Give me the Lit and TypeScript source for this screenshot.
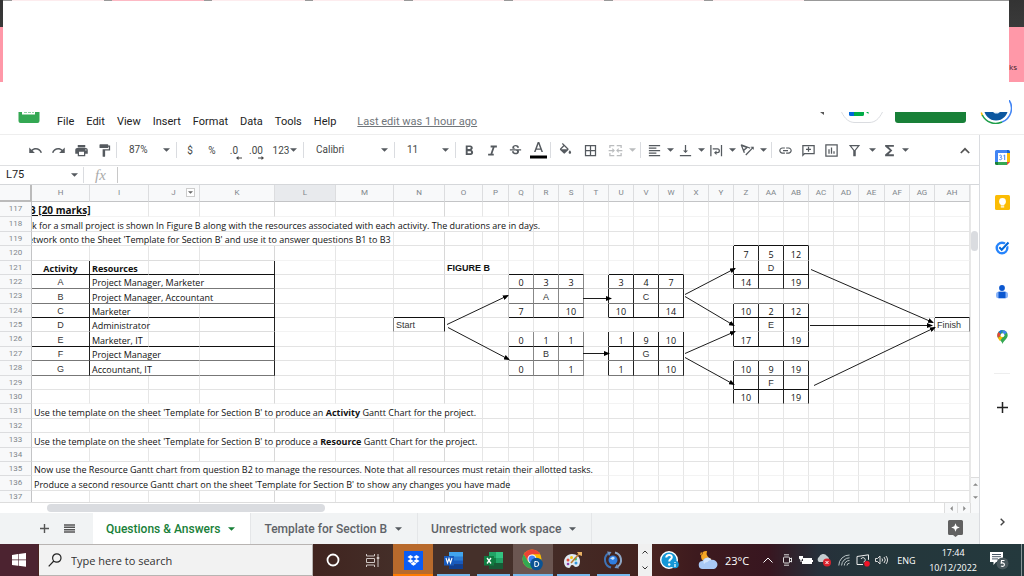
import { LitElement, html, css, svg, nothing } from "lit";
import { customElement } from "lit/decorators.js";
import { classMap } from "lit/directives/class-map.js";

const COLS = "H I J K L M N O P Q R S T U V W X Y Z AA AB AC AD AE AF AG AH".split(" ");
const COL_WIDTHS = [58, 59, 51, 75, 61, 58, 51, 38, 26, 25, 25, 25, 25, 25, 25, 25, 25, 25, 25, 25, 25, 25, 25, 26, 25, 25];
const STRONG_COLS = ["N", "K"];
const FIRST_ROW = 117;
const ROW_HEIGHTS = [15, 15, 14, 15, 14, 14, 15, 14, 14, 15, 14, 15, 14, 14, 15, 14, 15, 14, 14, 15, 13];
const SOFT_ROWS = [120, 125, 130, 135, 117];
const GREY_ROWS = [122, 123, 127, 128];

interface Cell { t: unknown; k?: string; span?: number }
interface Box { c0: string; c1: string; r0: number; r1: number; open?: boolean; tone?: string }

const BOXES: Box[] = [
  { c0: "H", c1: "H", r0: 121, r1: 128 },
  { c0: "I", c1: "K", r0: 121, r1: 128, open: true },
  { c0: "N", c1: "N", r0: 125, r1: 125 },
  { c0: "AH", c1: "AH", r0: 125, r1: 125 },
  { c0: "Q", c1: "S", r0: 122, r1: 124, tone: "grey" },
  { c0: "Q", c1: "S", r0: 126, r1: 128, tone: "grey" },
  { c0: "U", c1: "W", r0: 122, r1: 124 },
  { c0: "U", c1: "W", r0: 126, r1: 128 },
  { c0: "Z", c1: "AB", r0: 120, r1: 122 },
  { c0: "Z", c1: "AB", r0: 124, r1: 126 },
  { c0: "Z", c1: "AB", r0: 128, r1: 130 },
];

const CELLS: Record<string, Cell> = {
  H117: { t: "B [20 marks]", k: "title", span: 2 },
  H118: { t: "k for a small project is shown In Figure B along with the resources associated with each activity. The durations are in days.", k: "flush", span: 10 },
  H119: { t: "etwork onto the Sheet 'Template for Section B' and use it to answer questions B1 to B3", k: "cut", span: 6 },
  H121: { t: "Activity", k: "mid bold" },
  I121: { t: "Resources", k: "bold" },
  O121: { t: "FIGURE B", k: "bold arial", span: 2 },
  N125: { t: "Start", k: "arial soft" },
  AH125: { t: "Finish", k: "arial soft" },
  H131: { t: html`Use the template on the sheet 'Template for Section B' to produce an <b>Activity</b> Gantt Chart for the project.`, span: 8 },
  H133: { t: html`Use the template on the sheet 'Template for Section B' to produce a <b>Resource</b> Gantt Chart for the project.`, span: 8 },
  H135: { t: "Now use the Resource Gantt chart from question B2 to manage the resources. Note that all resources must retain their allotted tasks.", span: 13 },
  H136: { t: "Produce a second resource Gantt chart on the sheet 'Template for Section B' to show any changes you have made", span: 9 },
};

const RESOURCES: [string, string, number][] = [
  ["A", "Project Manager, Marketer", 3],
  ["B", "Project Manager, Accountant", 3],
  ["C", "Marketer", 1],
  ["D", "Administrator", 1],
  ["E", "Marketer, IT", 1],
  ["F", "Project Manager", 2],
  ["G", "Accountant, IT", 2],
];
RESOURCES.forEach(([a, r, span], i) => {
  CELLS[`H${122 + i}`] = { t: a, k: "mid arial soft" };
  CELLS[`I${122 + i}`] = { t: r, span };
});

const NODES: [string, number, string, number[]][] = [
  ["Q", 122, "A", [0, 3, 3, 7, 10]],
  ["Q", 126, "B", [0, 1, 1, 0, 1]],
  ["U", 122, "C", [3, 4, 7, 10, 14]],
  ["U", 126, "G", [1, 9, 10, 1, 10]],
  ["Z", 120, "D", [7, 5, 12, 14, 19]],
  ["Z", 124, "E", [10, 2, 12, 17, 19]],
  ["Z", 128, "F", [10, 9, 19, 10, 19]],
];
NODES.forEach(([c, r, name, v]) => {
  const i = COLS.indexOf(c);
  const put = (dc: number, dr: number, t: unknown, k: string) => { CELLS[`${COLS[i + dc]}${r + dr}`] = { t, k }; };
  put(0, 0, v[0], "mid"); put(1, 0, v[1], "mid"); put(2, 0, v[2], "mid");
  put(1, 1, name, "mid arial soft");
  put(0, 2, v[3], "mid"); put(2, 2, v[4], "mid");
});

const ARROWS = [
  [447, 139, 508, 110], [448, 142, 509, 174], [583, 113, 611, 113], [583, 168, 609, 168],
  [685, 109, 735, 83], [685, 111, 734, 140], [685, 168, 735, 146], [685, 172, 734, 199],
  [811, 84, 933, 137], [810, 140, 932, 140], [814, 200, 935, 142],
];

const boxAt = (c: number, r: number) =>
  BOXES.find((b) => r >= b.r0 && r <= b.r1 && c >= COLS.indexOf(b.c0) && c <= COLS.indexOf(b.c1));

const icon = (d: string, cls = "i16") => html`<svg class=${cls} viewBox="0 0 24 24" aria-hidden="true"><path d=${d} /></svg>`;
const caret = html`<svg class="caret" viewBox="0 0 8 4" aria-hidden="true"><path d="M0 0h8L4 4z" /></svg>`;

const P = {
  undo: "M12.5 8c-2.65 0-5.05.99-6.9 2.6L2 7v9h9l-3.62-3.62c1.39-1.16 3.16-1.88 5.12-1.88 3.54 0 6.55 2.31 7.6 5.5l2.37-.78C21.08 11.03 17.15 8 12.5 8z",
  redo: "M18.4 10.6C16.55 8.99 14.15 8 11.5 8c-4.65 0-8.58 3.03-9.96 7.22L3.9 16c1.05-3.19 4.05-5.5 7.6-5.5 1.95 0 3.73.72 5.12 1.88L13 16h9V7l-3.6 3.6z",
  print: "M19 8H5c-1.66 0-3 1.34-3 3v6h4v4h12v-4h4v-6c0-1.66-1.34-3-3-3zm-3 11H8v-5h8v5zm3-7c-.55 0-1-.45-1-1s.45-1 1-1 1 .45 1 1-.45 1-1 1zm-1-9H6v4h12V3z",
  paint: "M18 4V3c0-.55-.45-1-1-1H5c-.55 0-1 .45-1 1v4c0 .55.45 1 1 1h12c.55 0 1-.45 1-1V6h1v4H9v11c0 .55.45 1 1 1h2c.55 0 1-.45 1-1v-9h8V4h-3z",
  bold: "M15.6 10.79c.97-.67 1.65-1.77 1.65-2.79 0-2.26-1.75-4-4-4H6v15h8.04c2.09 0 3.71-1.7 3.71-3.79 0-1.52-.86-2.82-2.15-3.42zM9 6.5h3.500c.83 0 1.500.67 1.500 1.500s-.67 1.500-1.500 1.500H9v-3zm4 10H9v-3.500h4c.83 0 1.500.67 1.500 1.750s-.67 1.750-1.500 1.750z",
  italic: "M9 4v3h3.200l-3.400 10H5v3h9v-3h-2.200l3.400-10H19V4z",
  strike: "M6.850 7.080C6.850 4.370 9.450 3 12.240 3c1.640 0 3 .49 3.900 1.280.77.65 1.460 1.730 1.460 3.240h-3.010c0-.31-.05-.59-.15-.85-.29-.86-1.200-1.280-2.250-1.280-1.860 0-2.340 1.020-2.340 1.700 0 .48.25.88.74 1.210.38.25.77.48 1.410.70H7.390c-.21-.34-.54-.89-.54-1.920zM21 12v-2H3v2h9.620c1.150.45 1.960.75 1.960 1.970 0 1-.81 1.670-2.280 1.670-1.540 0-2.930-.54-2.930-2.510H6.400c0 .55.08 1.130.24 1.580.81 2.290 3.290 3.300 5.670 3.300 2.270 0 5.300-.89 5.300-4.050 0-.30-.01-1.160-.48-1.940H21V12z",
  fill: "M16.560 8.940 7.620 0 6.210 1.410l2.380 2.380-5.150 5.150c-.59.59-.59 1.540 0 2.120l5.500 5.500c.29.29.68.44 1.060.44s.77-.15 1.060-.44l5.500-5.500c.59-.58.59-1.530 0-2.120zM5.210 10 10 5.210 14.790 10H5.210zM19 11.500s-2 2.170-2 3.500c0 1.100.9 2 2 2s2-.9 2-2c0-1.330-2-3.500-2-3.500z",
  grid: "M3 3v18h18V3H3zm8 16H5v-6h6v6zm0-8H5V5h6v6zm8 8h-6v-6h6v6zm0-8h-6V5h6v6z",
  merge: "M2 3h8v2H4v3H2zM14 3h8v5h-2V5h-6zM2 16h2v3h6v2H2zM20 16h2v5h-8v-2h6zM1 11h6V8l4 4-4 4v-3H1zM23 11h-6V8l-4 4 4 4v-3h6z",
  left: "M15 15H3v2h12v-2zm0-8H3v2h12V7zM3 13h18v-2H3v2zm0 8h18v-2H3v2zM3 3v2h18V3H3z",
  bottom: "M16 12h-3V3h-2v9H8l4 4 4-4zM3 19v2h18v-2H3z",
  wrap: "M2 3h2v18H2zM19 3h2v18h-2zM6 10.500h7.500a2 2 0 0 1 0 4H12v-2.500l-4 3.500 4 3.500v-2.500h1.500a4 4 0 0 0 0-8H6z",
  rotate: "M1 3l5 13 2-.8-1.200-3 5.700-4.800 3 1.800L17 7.600 2.500 2zm4.800 7L4 5.500l5.500 2zM22 6v5l-1.700-1.700L10 20l-1.500-1.500L18.800 7.800 17 6z",
  link: "M3.900 12c0-1.710 1.390-3.100 3.100-3.100h4V7H7c-2.760 0-5 2.240-5 5s2.240 5 5 5h4v-1.900H7c-1.710 0-3.100-1.390-3.100-3.100zM8 13h8v-2H8v2zm9-6h-4v1.900h4c1.710 0 3.100 1.390 3.100 3.100s-1.390 3.100-3.100 3.100h-4V17h4c2.760 0 5-2.240 5-5s-2.240-5-5-5z",
  comment: "M2 3v19l4-4h16V3H2zm18 13H5l-1 1V5h16v11zM11 6h2v3h3v2h-3v3h-2v-3H8V9h3z",
  chart: "M2 2v20h20V2H2zm18 18H4V4h16v16zM7 10h2v7H7zm4-3h2v10h-2zm4 6h2v4h-2z",
  filter: "M3 3h18l-7 9v9h-4v-9zm4 2 5 6.500L17 5z",
  sigma: "M19 3H5v2.500l7.500 6.500L5 18.500V21h14v-3H10.500l6-6-6-6H19z",
};

@customElement("sheet-grid")
class SheetGrid extends LitElement {
  static styles = css`
    :host { display: grid; grid-template: minmax(0, 1fr) 10px / minmax(0, 1fr) 9px; min-height: 0; flex: 1; background: #fff; }
    .pane { position: relative; overflow: hidden; border-bottom: 1px solid #ddd; }
    table { width: 100%; table-layout: fixed; border-collapse: separate; border-spacing: 0; }
    th, td { box-sizing: border-box; padding: 0; font-weight: 400; white-space: nowrap; }
    thead th { height: 17px; font: 8px/14px Roboto, sans-serif; color: #80868b; background: #f8f9fa; border-right: 1px solid #dcdddf; border-bottom: 1px solid #c3c4c6; }
    thead th.corner { border-right: 2px solid #bbb; border-bottom: 2px solid #bbb; }
    thead th.on { background: #e8eaed; }
    .drop { float: right; width: 9px; height: 9px; margin: 2px 4px 0 0; padding: 0; border: 1px solid #ccc; background: #fff; display: grid; place-items: center; }
    .drop svg { width: 5px; height: 3px; fill: #666; }
    .jlabel { padding-left: 12px; }
    tbody th { font: 8px/12px Roboto, sans-serif; color: #80868b; background: #f8f9fa; border-right: 1px solid #c3c4c6; border-bottom: 1px solid #dcdddf; }
    td { font: 9px/11px "Open Sans", "Noto Sans", sans-serif; color: #111; padding: 2px 0 0 2px; border-right: 1px solid #e6e6e6; border-bottom: 1px solid #e3e3e3; vertical-align: bottom; }
    td.strongcol { border-right-color: #d8d8d8; }
    td.softrow { border-bottom-color: #f3f3f3; }
    td.vbox { border-right-color: #222; }
    td.vgrey { border-right-color: #888; }
    td.vlight { border-right-color: #c4c4c4; }
    td.hbox { border-bottom-color: #111; }
    td.hgrey { border-bottom-color: #777; }
    td.hsoft { border-bottom-color: #ddd; }
    .mid { text-align: center; padding-left: 0; }
    .bold { font-weight: 700; }
    .arial { font-family: "Liberation Sans", Arial, sans-serif; }
    .soft { color: #333; }
    .title { font-size: 10px; font-weight: 700; text-decoration: underline; text-indent: -3px; overflow: hidden; padding-left: 0; }
    .flush { padding-left: 0; }
    .cut { text-indent: -4px; overflow: hidden; padding-left: 0; }
    .arrows { position: absolute; inset: 0; width: 100%; height: 100%; pointer-events: none; }
    .arrows line { stroke: #1c1c1c; stroke-width: 1; }
    .vbar { display: flex; flex-direction: column; justify-content: space-between; border-left: 1px solid #e8e8e8; padding-top: 46px; }
    .vthumb { width: 7px; height: 20px; border-radius: 4px; background: #dadce0; }
    .steps { display: grid; grid-template-rows: 13px 12px; border-top: 1px solid #ddd; background: #f8f9fa; }
    .step { border: 0; padding: 0; background: #f8f9fa; display: grid; place-items: center; }
    .step svg { width: 5px; height: 5px; fill: #888; }
    .hbar { display: flex; align-items: stretch; padding-left: 47px; }
    .hthumb { width: 278px; margin: 1px auto 1px 0; border-radius: 4px; background: #dadce0; }
    .hbar .step { width: 13px; border-left: 1px solid #ddd; }
    .nook { background: #f8f9fa; border-left: 1px solid #ddd; }
  `;

  private cell(r: number, c: number, cell: Cell | undefined) {
    const span = cell?.span ?? 1;
    const last = c + span - 1;
    const here = boxAt(last, r);
    const next = last + 1 < COLS.length ? boxAt(last + 1, r) : undefined;
    const v = here !== next ? here ?? next : here && !here.open ? here : undefined;
    const h = boxAt(c, r) ?? boxAt(c, r + 1);
    const soft = SOFT_ROWS.includes(r);
    const grey = GREY_ROWS.includes(r);
    const cls: Record<string, boolean> = {
      strongcol: STRONG_COLS.includes(COLS[last]),
      softrow: soft && !h,
      vbox: !!v && v.tone !== "grey" && !(v.c0 === "AH"),
      vgrey: (!!v && v.tone === "grey" && !!here) || v?.c0 === "AH" || (v?.c0 === "N" && !here),
      vlight: !!v && v.tone === "grey" && !here,
      hbox: !!h && !soft && !grey,
      hgrey: !!h && grey,
      hsoft: !!h && soft,
    };
    (cell?.k ?? "").split(" ").filter(Boolean).forEach((k) => (cls[k] = true));
    return html`<td class=${classMap(cls)} colspan=${span}>${cell ? cell.t : nothing}</td>`;
  }

  private row(h: number, i: number) {
    const r = FIRST_ROW + i;
    const out = [];
    for (let c = 0; c < COLS.length; ) {
      const cell = CELLS[`${COLS[c]}${r}`];
      out.push(this.cell(r, c, cell));
      c += cell?.span ?? 1;
    }
    return html`<tr style="height:${h}px"><th scope="row">${r}</th>${out}</tr>`;
  }

  render() {
    return html`
      <div class="pane">
        <table>
          <colgroup>
            <col style="width:32px" />
            ${COLS.map((_, i) => (i < COL_WIDTHS.length ? html`<col style="width:${COL_WIDTHS[i]}px" />` : html`<col />`))}
          </colgroup>
          <thead>
            <tr>
              <th class="corner"></th>
              ${COLS.map((c) => html`<th scope="col" class=${c === "L" ? "on" : ""}>${c === "J"
                ? html`<button class="drop" aria-label="Column J menu"><svg viewBox="0 0 8 4"><path d="M0 0h8L4 4z" /></svg></button><span class="jlabel">J</span>`
                : c}</th>`)}
            </tr>
          </thead>
          <tbody>${ROW_HEIGHTS.map((h, i) => this.row(h, i))}</tbody>
        </table>
        <svg class="arrows" aria-hidden="true">
          <defs><marker id="tip" markerWidth="6" markerHeight="5" refX="5" refY="2.5" orient="auto" markerUnits="userSpaceOnUse"><path d="M0 0 6 2.500 0 5z" fill="#000" /></marker></defs>
          ${ARROWS.map(([a, b, c, d]) => svg`<line x1=${a} y1=${b + 0.5} x2=${c} y2=${d + 0.5} marker-end="url(#tip)" />`)}
        </svg>
      </div>
      <div class="vbar">
        <div class="vthumb"></div>
        <div class="steps">
          <button class="step" aria-label="Scroll up"><svg viewBox="0 0 4 4"><path d="M0 3h4L2 1z" /></svg></button>
          <button class="step" aria-label="Scroll down"><svg viewBox="0 0 4 4"><path d="M0 1h4L2 3z" /></svg></button>
        </div>
      </div>
      <div class="hbar">
        <div class="hthumb"></div>
        <button class="step" aria-label="Scroll left"><svg viewBox="0 0 4 4"><path d="M3 0v4L1 2z" /></svg></button>
        <button class="step" aria-label="Scroll right"><svg viewBox="0 0 4 4"><path d="M1 0v4l2-2z" /></svg></button>
      </div>
      <div class="nook"></div>
    `;
  }
}

@customElement("task-bar")
class TaskBar extends LitElement {
  static styles = css`
    :host { display: flex; height: 32px; flex: none; font-family: "Open Sans", "Noto Sans", sans-serif; color: #fff; background: linear-gradient(90deg, #4a2420 0, #4a2420 63%, #3d1a1e 68%, #381620 75%, #26303a 80%, #24363b 85%, #24393d 100%); }
    button { border: 0; padding: 0; background: none; color: inherit; font: inherit; display: grid; place-items: center; }
    svg { display: block; }
    .start { width: 38px; background: #4c2330; }
    .search { width: 274px; box-sizing: border-box; margin-left: 1px; display: flex; align-items: center; background: #f2f2f2; border: 1px solid #b8b4b2; border-left: 0; padding-left: 9px; gap: 9px; }
    .search input { flex: 1; min-width: 0; border: 0; outline: 0; background: none; padding: 2px 0 0; font: 11px/20px "Open Sans", "Noto Sans", sans-serif; color: #333; }
    .search input::placeholder { color: #333; opacity: 1; }
    .apps { width: 325px; display: flex; background: linear-gradient(90deg, #40241f, #45302a 30%, #45302a 60%, #43231f); }
    .app { width: 40px; height: 32px; box-sizing: border-box; }
    .app.run { background: linear-gradient(#76b9ed, #76b9ed) 50% 100% / 33px 2px no-repeat; }
    .app.hot { background: linear-gradient(#ff7b00, #ff7b00) 50% 100% / 100% 2px no-repeat, #b86a2c; }
    .app.live { background: linear-gradient(#76b9ed, #76b9ed) 50% 100% / 100% 2px no-repeat, #6b5651; }
    .more { width: 14px; background: #f0f0f0; display: grid; grid-template-rows: 1fr 1fr; }
    .tray { flex: 1; display: flex; align-items: center; padding-left: 4px; }
    .tray button { width: 19px; height: 24px; flex: none; }
    .tray .wide { width: 26px; }
    .tray .weather { display: flex; align-items: center; gap: 7px; width: auto; margin: 0 9px 0 16px; font-size: 11px; }
    .tray .lang { width: auto; margin-left: 6px; font-size: 9px; }
    .clock { margin-left: auto; text-align: center; font-size: 9px; line-height: 15px; }
    .tray .note { margin: 0 12px; width: 20px; }
    .edge { width: 1px; align-self: stretch; background: #8a9598; margin-right: 2px; }
  `;

  render() {
    return html`
      <button class="start" aria-label="Start"><svg width="14" height="14" viewBox="0 0 14 14" fill="#fff"><path d="M0 2l6-.9v5.500H0zM6.600 1 14 0v6.600H6.600zM0 7.200h6v5.500L0 11.900zM6.600 7.200H14v6.600l-7.400-1z" /></svg></button>
      <label class="search">
        <svg width="14" height="14" viewBox="0 0 14 14" fill="none" stroke="#222" stroke-width="1.200"><circle cx="8.800" cy="5" r="4.200" /><path d="M5.800 8 .7 13.300" /></svg>
        <input type="text" placeholder="Type here to search" aria-label="Search" />
      </label>
      <div class="apps">
        <button class="app" aria-label="Cortana"><svg width="14" height="14" viewBox="0 0 14 14" fill="none" stroke="#fff" stroke-width="1.800"><circle cx="7" cy="7" r="5.500" /></svg></button>
        <button class="app" aria-label="Task view"><svg width="14" height="14" viewBox="0 0 14 14" fill="none" stroke="#cfc6c3"><path d="M.5 1v2h8V1M.5 5.500h8v4h-8zM.5 14v-2h8v2M12 1v3M12 6v8" /><path d="M11 4.500h2v1h-2z" fill="#fff" /></svg></button>
        <button class="app hot" aria-label="Dropbox"><svg width="19" height="19" viewBox="0 0 19 19"><path fill="#0a5cf5" d="M0 0h19v19H0z" /><path fill="#fff" d="M6.500 4 9.500 6l-3 2-3-2zM12.500 4l3 2-3 2-3-2zM3.500 10l3-2 3 2-3 2zM12.500 8l3 2-3 2-3-2zM6.500 12.700l3-2 3 2-3 2z" /></svg></button>
        <button class="app run" aria-label="Word"><svg width="19" height="17" viewBox="0 0 19 17"><path fill="#41a5ee" d="M5 0h14v5H5z" /><path fill="#2b7cd3" d="M5 4.500h14v4.500H5z" /><path fill="#185abd" d="M5 8.500h14v4H5z" /><path fill="#103f91" d="M5 12.500h14V17H5z" /><path fill="#185abd" d="M0 4h10v9.500H0z" /><path d="m2 6 1.500 5L5 6.500l1.500 4.500L8 6" fill="none" stroke="#fff" stroke-width="1.100" /></svg></button>
        <button class="app run" aria-label="Excel"><svg width="19" height="17" viewBox="0 0 19 17"><path fill="#21a366" d="M5 0h7v6H5z" /><path fill="#33c481" d="M12 0h7v6h-7z" /><path fill="#107c41" d="M5 6h7v5H5z" /><path fill="#21a366" d="M12 6h7v5h-7z" /><path fill="#185c37" d="M5 11h14v6H5z" /><path fill="#107c41" d="M0 4h10v9.500H0z" /><path d="m3 6 4 5.500M7 6l-4 5.500" stroke="#fff" stroke-width="1.300" /></svg></button>
        <button class="app live" aria-label="Chrome"><svg width="22" height="22" viewBox="0 0 22 22"><circle cx="10" cy="10" r="9.500" fill="#fbbc04" /><path fill="#ea4335" d="M1.800 5.200A9.500 9.500 0 0 1 18.300 5.300H10L5.900 12.400z" /><path fill="#34a853" d="M1.800 5.200A9.500 9.500 0 0 0 10 19.500l4-7H6z" /><circle cx="10" cy="10" r="4.500" fill="#fff" /><circle cx="10" cy="10" r="3.500" fill="#4285f4" /><circle cx="14.500" cy="15" r="6.300" fill="#0b5394" /><path d="M12.800 12.500h1.500a2.300 2.300 0 0 1 0 5h-1.500z" fill="none" stroke="#fff" /></svg></button>
        <button class="app run" aria-label="Paint"><svg width="20" height="18" viewBox="0 0 20 18"><path fill="#dfeaf2" d="M9 3C4 3 1 7 1 11c0 3 2 6 5 6 2 0 1-3 3-3s2 2 4 2c3 0 4-3 4-6 0-4-3-7-8-7z" /><circle cx="5" cy="9" r="1.500" fill="#e74c3c" /><circle cx="8.500" cy="6.500" r="1.500" fill="#f1c40f" /><circle cx="12.500" cy="8" r="1.500" fill="#2ecc71" /><circle cx="13" cy="12" r="1.500" fill="#3498db" /><circle cx="5" cy="13" r="1.300" fill="#8e44ad" /><path d="m8 12 8-9" stroke="#b9792f" stroke-width="1.600" /><path fill="#e8b063" d="M14 1h5v4l-3-1z" /></svg></button>
        <button class="app run" aria-label="Sync"><svg width="20" height="20" viewBox="0 0 20 20" fill="none"><circle cx="10" cy="10" r="4.500" fill="#2f7de0" /><path fill="#bfe0ff" d="M7 8.500l3-2 2 1.500-2 2z" /><path d="M8 17.500A8 8 0 0 1 5 3.500" stroke="#3f73b5" stroke-width="2" /><path d="M12 2.500a8 8 0 0 1 3 14" stroke="#8fa6c4" stroke-width="2" /><path d="M4 1.500 8.500 2 6 6zM16 18.500l-4.500-.5L14 14z" fill="#6f94c4" /></svg></button>
      </div>
      <div class="more">
        <button aria-label="Previous"><svg width="6" height="4" viewBox="0 0 6 4" fill="none" stroke="#333"><path d="m.5 3.500 2.500-2.500 2.500 2.500" /></svg></button>
        <button aria-label="Next"><svg width="6" height="4" viewBox="0 0 6 4" fill="none" stroke="#333"><path d="M.5.5 3 3 5.500.5" /></svg></button>
      </div>
      <div class="tray">
        <button class="wide" aria-label="Help"><svg width="19" height="18" viewBox="0 0 19 18"><circle cx="9" cy="9" r="8.300" fill="#1597d6" stroke="#fff" stroke-width="1.400" /><path d="M6.200 6.500c.3-3.600 6-3.300 5.600 0-.2 1.700-2.600 1.700-2.600 4" fill="none" stroke="#fff" stroke-width="2" /><circle cx="9.200" cy="13.500" r="1.200" fill="#fff" /><circle cx="15" cy="13.500" r="3.800" fill="#1597d6" /><path d="M15 13v3M15 11v1" stroke="#fff" stroke-width="1.200" /></svg></button>
        <button class="weather"><svg width="20" height="20" viewBox="0 0 20 20"><path fill="#f5a623" d="M9 1a5.500 5.500 0 1 0 4.500 8A6 6 0 0 1 9 1zM3 2l2 2-3 1z" /><path fill="#a9c8f5" d="M5 19a4 4 0 0 1-.5-8 5 5 0 0 1 9-1A4.500 4.500 0 0 1 16 19z" /><path fill="#d3e4fb" d="M6 14a4 4 0 0 1 7.500-4 5 5 0 0 0-4 2A5 5 0 0 0 6 14z" /></svg>23°C</button>
        <button aria-label="Show hidden icons"><svg width="10" height="6" viewBox="0 0 10 6" fill="none" stroke="#fff"><path d="m.5 5.500 4.500-4.500 4.500 4.500" /></svg></button>
        <button aria-label="Meet now"><svg width="10" height="12" viewBox="0 0 10 12" fill="none" stroke="#ddd"><rect x="1.500" y="3" width="6" height="6" rx="1" /><path d="m7.500 5 2-1v4l-2-1M2 .8h5M2 11.200h5" /></svg></button>
        <button aria-label="Battery"><svg width="14" height="10" viewBox="0 0 14 10" fill="#fff"><path d="M4 3h9v6H3V6h1zM13 5h1v2h-1zM0 1h4v2.500L2.500 5v2h-1V5L0 3.500z" /></svg></button>
        <button aria-label="OneDrive"><svg width="15" height="14" viewBox="0 0 15 14"><path fill="#c4cdd0" d="M2 9a3 3 0 0 1 0-5 4.500 4.500 0 0 1 8-1 3.500 3.500 0 0 1 2 3L6 9z" /><circle cx="10" cy="9.500" r="4" fill="#d9232e" /><path d="m8.500 8 3 3m0-3-3 3" stroke="#fff" /></svg></button>
        <button aria-label="Network"><svg width="12" height="12" viewBox="0 0 12 12" fill="none" stroke="#bac4c6"><path d="M.8 11.500A10.500 10.500 0 0 1 11.500 1M3.600 11.500a8 8 0 0 1 7.900-7.700M6.300 11.500a5 5 0 0 1 5.200-5M9 11.500a2.500 2.500 0 0 1 2.500-2.300" /></svg></button>
        <button aria-label="Security"><svg width="14" height="13" viewBox="0 0 14 13" fill="none" stroke="#eee"><path d="M1 2.500 12.500.800v5M1 2.500v8h6M5 5a2.200 2.200 0 1 1 2.500 3" /><circle cx="11" cy="9.700" r="2.800" fill="#f01428" stroke="none" /></svg></button>
        <button aria-label="Volume"><svg width="13" height="10" viewBox="0 0 13 10" fill="none" stroke="#ddd"><path d="M.5 3.500h2L5 1v8L2.500 6.500h-2zM7 3.500a2.500 2.500 0 0 1 0 3M9 2a4.500 4.500 0 0 1 0 6M11 1a6.500 6.500 0 0 1 0 8" /></svg></button>
        <button class="lang">ENG</button>
        <div class="clock"><div>17:44</div><div>10/12/2022</div></div>
        <button class="note" aria-label="Notifications"><svg width="20" height="19" viewBox="0 0 20 19"><path fill="#fff" d="M1 1h13v10H7l-2.500 3v-3H1z" /><path d="M3 3.500h9M3 5.700h9M3 7.900h6" stroke="#345" stroke-width=".9" /><circle cx="13.500" cy="12.500" r="6" fill="#48575c" /><path d="M15.500 9.500h-3l-.3 2.600c2.200-.6 3.200.3 3.200 1.600 0 1.700-2 2.100-3.400 1.300" fill="none" stroke="#fff" stroke-width="1.100" /></svg></button>
        <div class="edge"></div>
      </div>
    `;
  }
}

@customElement("app-root")
class AppRoot extends LitElement {
  static styles = css`
    :host { display: flex; flex-direction: column; height: 100vh; overflow: hidden; background: #fff; font-family: Roboto, "Liberation Sans", sans-serif; }
    button { border: 0; padding: 0; background: none; color: inherit; font: inherit; display: grid; place-items: center; }
    svg { display: block; }
    .browser { display: flex; height: 82px; flex: none; background: linear-gradient(#333 0, #3a3a3a 27px, #ff98a8 27px); }
    .blank { flex: 1; margin-left: 3px; background: linear-gradient(90deg, #999 0 9px, #fdecee 9px 101px, #999 101px 109px, #fdb9c4 109px 201px, #999 201px 209px, #fdecee 209px 302px, #999 302px 310px, #fdecee 310px 401px, #999 401px 410px, #fdecee 410px 501px, #999 501px 510px, #fdecee 510px 601px, #999 601px 610px, #fdecee 610px 701px, #999 701px 710px, #fdecee 710px 801px, #999 801px) 0 0 / 100% 1px no-repeat, #fff; }
    .bookmark { width: 15px; box-sizing: border-box; padding-top: 60px; font: 8px/14px "Open Sans", sans-serif; color: #402028; }
    .header { display: flex; align-items: flex-start; height: 53px; flex: none; box-sizing: border-box; padding: 30px 12px 0 18px; border-bottom: 1px solid #eee; }
    .menus { display: flex; gap: 12px; margin-left: 17px; font-size: 11px; line-height: 19px; color: #222; }
    .edited { margin-left: 21px; font-size: 11px; line-height: 19px; color: #70757a; text-decoration: underline; }
    .status { margin-left: auto; margin-right: 17px; }
    .share { width: 71px; height: 11px; margin: 0 14px 0 12px; background: #188038; border-radius: 0 0 3px 3px; }
    .avatar { margin-top: -12px; }
    .main { display: flex; flex: 1; min-height: 0; }
    .work { flex: 1; min-width: 0; display: flex; flex-direction: column; }
    .toolbar { display: flex; align-items: center; height: 31px; flex: none; box-sizing: border-box; padding: 0 4px 0 24px; border-bottom: 1px solid #dfe0e2; color: #444746; font-size: 10px; }
    .toolbar button { width: 23px; height: 24px; flex: none; }
    .toolbar .start { margin-left: 2px; }
    .toolbar .fmt { width: 22px; }
    .toolbar .roomy { width: 25px; }
    .i16 { width: 15px; height: 15px; fill: #555a5f; }
    .caret { width: 7px; height: 4px; fill: #555a5f; flex: none; }
    .sep { width: 1px; height: 16px; background: #dadce0; flex: none; }
    .toolbar .drop { width: 8px; }
    .toolbar .drop.slack { width: 12px; }
    .toolbar .end { margin-right: 4px; }
    .toolbar .far { margin-left: auto; width: 20px; }
    .toolbar .num { width: 36px; display: flex; align-items: center; justify-content: center; gap: 1px; }
    .toolbar .dec { position: relative; }
    .dec svg { position: absolute; right: 3px; bottom: 2px; }
    .dim { opacity: .4; }
    .sel { display: flex; align-items: center; flex: none; box-sizing: border-box; padding: 0 6px 0 12px; }
    .sel select { appearance: none; border: 0; outline: 0; background: none; padding: 0; flex: 1; min-width: 0; font: 10px/16px Roboto, sans-serif; color: #444746; }
    .zoom { width: 59px; }
    .face { width: 90px; }
    .size { width: 60px; }
    .formula { display: flex; align-items: center; height: 19px; flex: none; box-sizing: border-box; border-bottom: 1px solid #d5d7da; }
    .name { width: 71px; box-sizing: border-box; border: 0; outline: 0; padding: 0 0 0 6px; font: 11px/16px Roboto, sans-serif; color: #222; }
    .formula .sep { margin-left: 5px; }
    .fx { width: 33px; text-align: center; font: italic 15px/16px "Liberation Serif", serif; color: #aaa; }
    .formula .fx + .sep { margin: 0; background: #c8c8c8; }
    .formula input.expr { flex: 1; min-width: 0; border: 0; outline: 0; padding: 0 6px; font: 11px/16px Roboto, sans-serif; }
    .tabs { display: flex; align-items: stretch; height: 31px; flex: none; background: #f1f3f4; padding: 0 16px 0 32px; font-size: 12px; font-weight: 500; color: #5f6368; }
    .tabs .tool { width: 25px; }
    .tab { display: flex; align-items: center; gap: 8px; padding: 0 15px 0 13px; border-right: 1px solid #e4e6e8; }
    .tabs .tab { display: flex; }
    .tabs .on { background: #fff; color: #188038; margin-left: 11px; }
    .on .caret { fill: #188038; }
    .explore { margin-left: auto; }
    .side { width: 45px; flex: none; border-left: 1px solid #dadce0; display: flex; flex-direction: column; align-items: center; padding-top: 13px; box-sizing: border-box; }
    .side button { width: 18px; height: 18px; margin-bottom: 27px; flex: none; }
    .rule { width: 16px; height: 1px; background: #eee; margin-bottom: 24px; }
    .side .close { margin: auto 0 13px; }
  `;

  private drop(label: string, cls = "") {
    return html`<button class="drop ${cls}" aria-label=${label}>${caret}</button>`;
  }

  render() {
    return html`
      <div class="browser"><div class="blank"></div><div class="bookmark">ks</div></div>
      <header class="header">
        <svg width="22" height="12" viewBox="0 0 22 12"><path fill="#34a853" d="M.5 0H4v2.500h13V0h4.500v9a2 2 0 0 1-2 2h-17a2 2 0 0 1-2-2z" /><path d="M6 .5h3M10 .5h3M14 .5h2" stroke="#8fd0a1" /></svg>
        <nav class="menus">${["File", "Edit", "View", "Insert", "Format", "Data", "Tools", "Help"].map((m) => html`<button>${m}</button>`)}</nav>
        <a class="edited" href="#history">Last edit was 1 hour ago</a>
        <svg class="status" width="4" height="3" viewBox="0 0 4 3"><path d="M0 0h4v3z" fill="#555" /></svg>
        <svg width="42" height="11" viewBox="0 0 42 11"><path d="M.5 0C4 7 8 10.500 14 10.500h14C34 10.500 38 7 41.500 0" fill="none" stroke="#dadce0" /><path fill="#0066da" d="M8 0h5v4H9.500A1.500 1.500 0 0 1 8 2.500z" /><path fill="#00ac47" d="M13 0h10v2.500A1.500 1.500 0 0 1 21.500 4H13zM25 0h2.500v2z" /></svg>
        <button class="share" aria-label="Share"></button>
        <svg class="avatar" width="32" height="24" viewBox="0 0 32 24">
          <defs><clipPath id="lower"><path d="M0 12h29V0h3v24H0z" /></clipPath></defs>
          <g clip-path="url(#lower)" fill="none" stroke-width="1.500"><circle cx="16" cy="8.500" r="12" fill="#0b57a0" /><path fill="#e6f0fa" d="M13 12h7l-2 1.500h-3z" /><path d="M1.300 12.500 2.500 16" stroke="#fbbc04" /><path d="M2.300 15A14.800 14.800 0 0 0 22 22" stroke="#1e9e4a" /><path d="M22 22A14.800 14.800 0 0 0 29 0" stroke="#4285f4" /></g>
        </svg>
      </header>
      <div class="main">
        <div class="work">
          <div class="toolbar" role="toolbar">
            <button aria-label="Undo">${icon(P.undo)}</button>
            <button aria-label="Redo">${icon(P.redo)}</button>
            <button aria-label="Print">${icon(P.print)}</button>
            <button aria-label="Paint format">${icon(P.paint)}</button>
            <i class="sep"></i>
            <label class="sel zoom"><select aria-label="Zoom"><option>87%</option></select>${caret}</label>
            <i class="sep"></i>
            <button class="fmt start">$</button><button class="fmt">%</button>
            <button class="fmt dec">.0<svg width="6" height="4" viewBox="0 0 6 4"><path d="M6 1.500H2.500V0L0 2l2.500 2V2.500H6z" fill="#444" /></svg></button>
            <button class="fmt dec">.00<svg width="6" height="4" viewBox="0 0 6 4"><path d="M0 1.500h3.500V0L6 2 3.500 4V2.500H0z" fill="#444" /></svg></button>
            <button class="num">123${caret}</button>
            <i class="sep"></i>
            <label class="sel face"><select aria-label="Font"><option>Calibri</option></select>${caret}</label>
            <i class="sep"></i>
            <label class="sel size"><select aria-label="Font size"><option>11</option></select>${caret}</label>
            <i class="sep"></i>
            <button class="start" aria-label="Bold">${icon(P.bold)}</button>
            <button aria-label="Italic">${icon(P.italic)}</button>
            <button aria-label="Strikethrough">${icon(P.strike)}</button>
            <button aria-label="Text colour"><svg width="17" height="19" viewBox="0 0 17 19"><path fill="#555a5f" d="M7.700 1 4 11h1.600l.8-2.200h4.200l.8 2.200H13L9.300 1zM6.900 7.500l1.600-4.600 1.600 4.600z" /><path d="M0 14.500h17v3H0z" /></svg></button>
            <i class="sep"></i>
            <button class="roomy start" aria-label="Fill colour">${icon(P.fill)}</button>
            <button class="roomy" aria-label="Borders">${icon(P.grid)}</button>
            <button class="roomy dim" aria-label="Merge cells">${icon(P.merge)}</button>
            ${this.drop("Merge options", "dim end")}
            <i class="sep"></i>
            <button class="start" aria-label="Align">${icon(P.left)}</button>${this.drop("Align options")}
            <button aria-label="Vertical align">${icon(P.bottom)}</button>${this.drop("Vertical align options")}
            <button aria-label="Wrap">${icon(P.wrap)}</button>${this.drop("Wrap options")}
            <button aria-label="Rotate">${icon(P.rotate)}</button>${this.drop("Rotate options", "end")}
            <i class="sep"></i>
            <button class="start" aria-label="Link">${icon(P.link)}</button>
            <button aria-label="Comment">${icon(P.comment)}</button>
            <button aria-label="Chart">${icon(P.chart)}</button>
            <button aria-label="Filter">${icon(P.filter)}</button>${this.drop("Filter options", "slack")}
            <button aria-label="Functions">${icon(P.sigma)}</button>${this.drop("Function options")}
            <button class="far" aria-label="Hide menus"><svg width="10" height="7" viewBox="0 0 10 7" fill="none" stroke="#555" stroke-width="1.700"><path d="M.8 6 5 1.800 9.200 6" /></svg></button>
          </div>
          <div class="formula">
            <input class="name" value="L75" aria-label="Name box" />${caret}
            <i class="sep"></i><span class="fx">fx</span><i class="sep"></i>
            <input class="expr" aria-label="Formula" />
          </div>
          <sheet-grid></sheet-grid>
          <div class="tabs">
            <button class="tool" aria-label="Add sheet"><svg width="9" height="9" viewBox="0 0 9 9"><path d="M4.500 0v9M0 4.500h9" stroke="#555" stroke-width="1.400" /></svg></button>
            <button class="tool" aria-label="All sheets"><svg width="11" height="9" viewBox="0 0 11 9"><path d="M0 1h11M0 3.300h11M0 5.700h11M0 8h11" stroke="#555" stroke-width="1.400" /></svg></button>
            <button class="tab on">Questions &amp; Answers${caret}</button>
            <button class="tab">Template for Section B${caret}</button>
            <button class="tab">Unrestricted work space${caret}</button>
            <button class="explore" aria-label="Explore"><svg width="15" height="17" viewBox="0 0 15 17"><path fill="#616161" d="M1.500 0h12A1.500 1.500 0 0 1 15 1.500v12a1.500 1.500 0 0 1-1.500 1.500H10l-2.500 2L5 15H1.500A1.500 1.500 0 0 1 0 13.500v-12A1.500 1.500 0 0 1 1.500 0z" /><path fill="#fff" d="m7.500 3.200 1.200 3.100 3.100 1.200-3.100 1.200-1.200 3.100-1.200-3.100-3.100-1.200 3.100-1.200z" /></svg></button>
          </div>
        </div>
        <aside class="side">
          <button aria-label="Calendar"><svg width="15" height="15" viewBox="0 0 15 15"><path fill="#4285f4" d="M1.500 0H12v3H3v9H0V1.500A1.500 1.500 0 0 1 1.500 0z" /><path fill="#1967d2" d="M12 0h1.500A1.500 1.500 0 0 1 15 1.500V3h-3z" /><path fill="#fbbc04" d="M12 3h3v9h-3z" /><path fill="#34a853" d="M3 12h9v3H3z" /><path fill="#188038" d="M0 12h3v3H1.500A1.500 1.500 0 0 1 0 13.500z" /><path fill="#ea4335" d="M12 12h3l-3 3z" /><path fill="#fff" d="M3 3h9v9H3z" /><path d="M4.500 5.500c2-1.200 3 1.300.9 1.800 2.400.2 1.600 3.300-1 2.200M8.500 5.800l1.200-.8v5" fill="none" stroke="#4285f4" /></svg></button>
          <button aria-label="Keep"><svg width="15" height="15" viewBox="0 0 15 15"><rect width="15" height="15" rx="1.500" fill="#fbbc04" /><circle cx="7.500" cy="6.500" r="3.400" fill="#fff" /><path fill="#fff" d="M5.800 9h3.400v1.500H5.800zM5.800 11.200h3.400v1.200H5.800z" /></svg></button>
          <button aria-label="Tasks"><svg width="15" height="15" viewBox="0 0 15 15" fill="none"><circle cx="7" cy="8" r="5.300" stroke="#2684fc" stroke-width="2.400" /><path d="m4.300 7.300 2.400 2.400L13.500 2.500" stroke="#fff" stroke-width="3.400" /><path d="m4.300 7.300 2.400 2.400L13.500 2.500" stroke="#0066da" stroke-width="2" /></svg></button>
          <button aria-label="Contacts"><svg width="12" height="14" viewBox="0 0 12 14"><circle cx="6" cy="3" r="2.900" fill="#0b57d0" /><rect y="6.700" width="12" height="6.500" rx="2.500" fill="#8ab4f8" /><path fill="#0b57d0" d="M2.500 6.700h7v6.500h-7z" /></svg></button>
          <button aria-label="Maps"><svg width="11" height="14" viewBox="0 0 11 14"><path fill="#34a853" d="M5.500 0A5.200 5.200 0 0 1 10.700 5.300C10.700 9 7 10 5.500 14 4.500 10 .3 9 .3 5.300A5.200 5.200 0 0 1 5.500 0z" /><path fill="#4285f4" d="M5.500 0a5.200 5.200 0 0 1 4.500 2.600L5.500 6z" /><path fill="#1a73e8" d="M5.500 0 3.500 4 1.600 2A5 5 0 0 1 5.500 0z" /><path fill="#ea4335" d="M1.600 2 4 4.500.9 8C0 6 0 4 1.600 2z" /><path fill="#fbbc04" d="M.9 8 7 3.500 6 7l-3.200 4z" /><circle cx="5.500" cy="5.200" r="1.900" fill="#fff" /></svg></button>
          <i class="rule"></i>
          <button aria-label="Get add-ons"><svg width="11" height="11" viewBox="0 0 11 11"><path d="M5.500 0v11M0 5.500h11" stroke="#222" stroke-width="1.500" /></svg></button>
          <button class="close" aria-label="Hide side panel"><svg width="5" height="8" viewBox="0 0 5 8" fill="none" stroke="#444" stroke-width="1.400"><path d="m.7.7 3.300 3.300L.7 7.300" /></svg></button>
        </aside>
      </div>
      <task-bar></task-bar>
    `;
  }
}
